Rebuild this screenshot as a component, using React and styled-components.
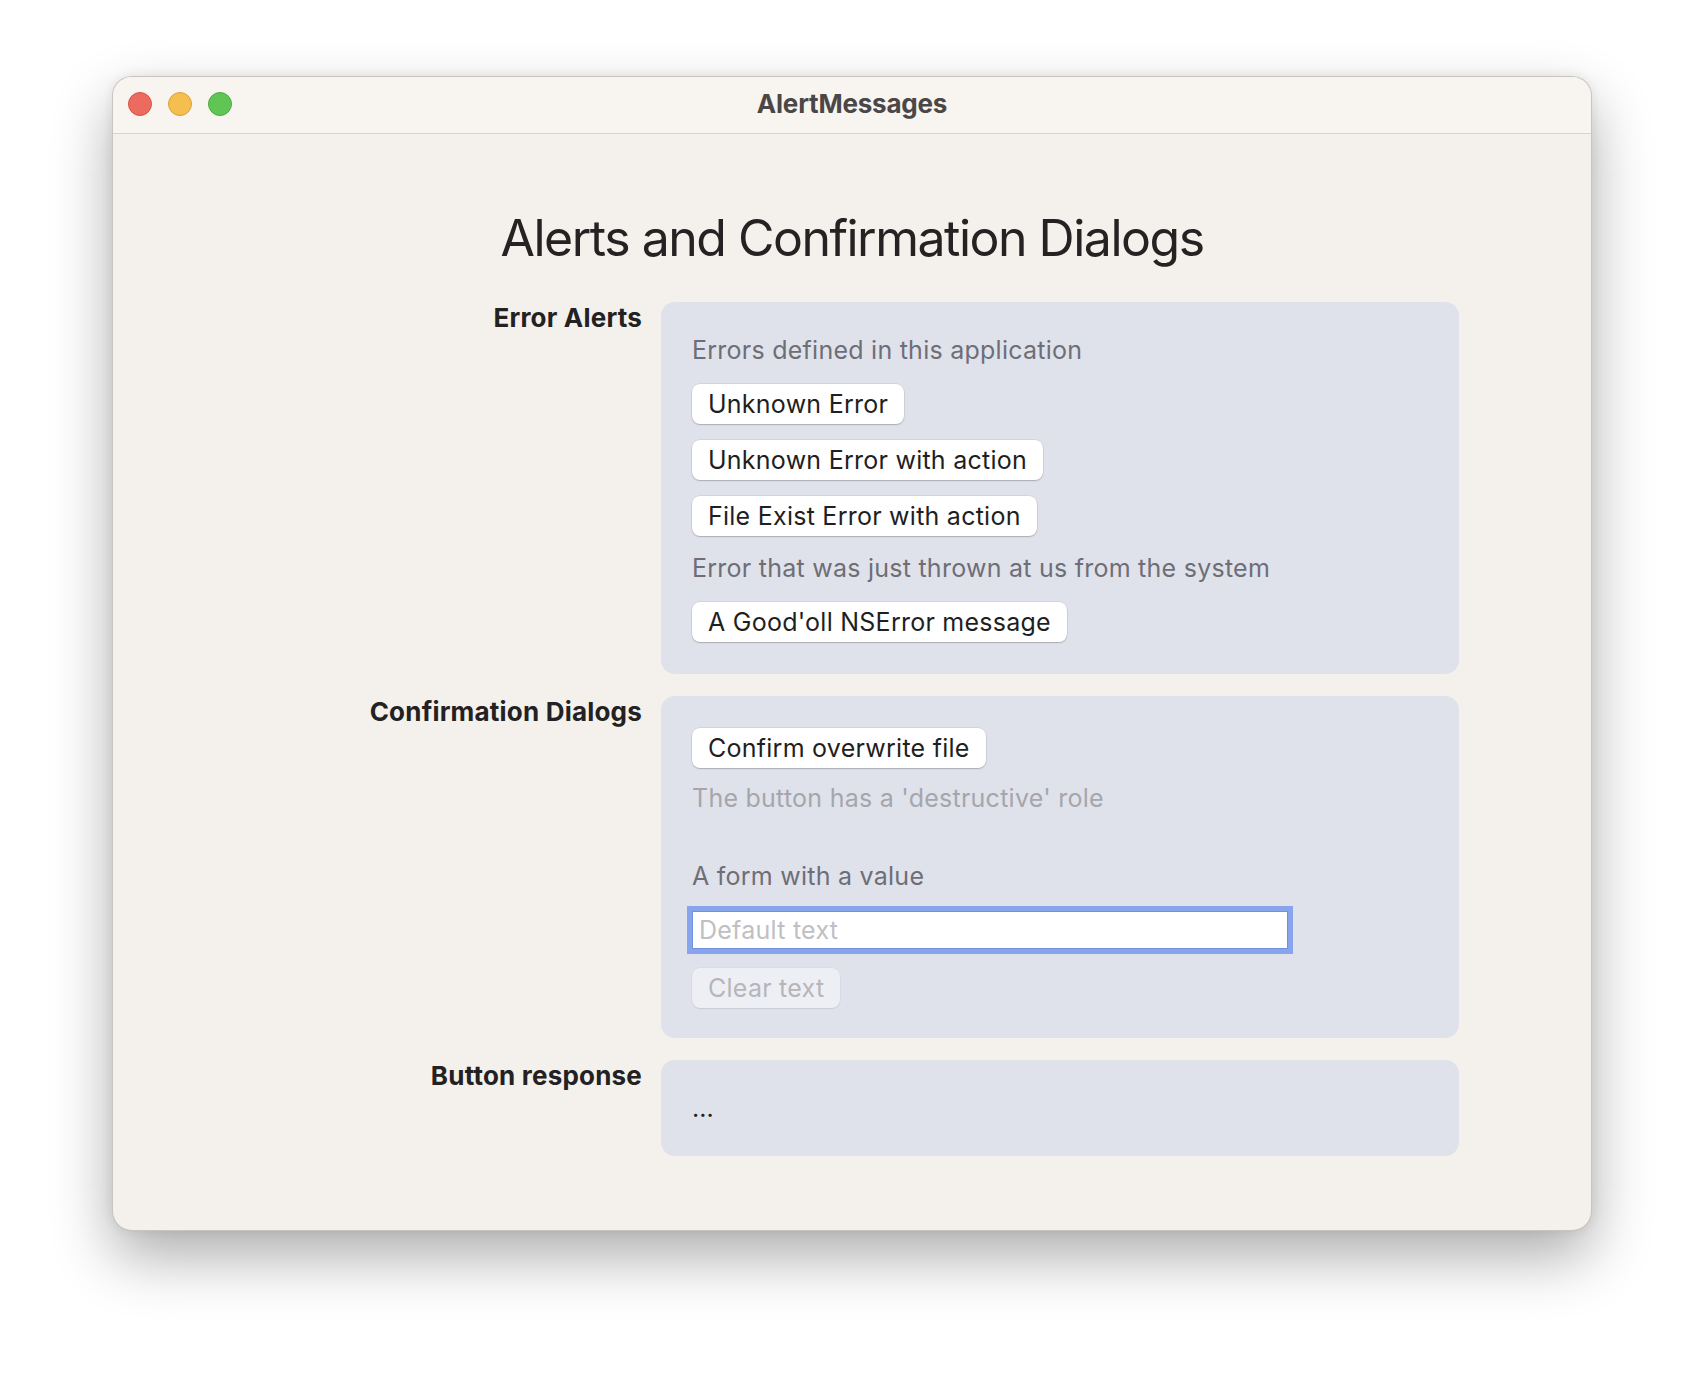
import React from "react";
import styled, { createGlobalStyle } from "styled-components";

const GlobalStyle = createGlobalStyle`
  html, body {
    margin: 0;
    padding: 0;
    background: #ffffff;
  }
  body {
    font-family: Inter, "Noto Sans", "Liberation Sans", sans-serif;
  }
`;

const Page = styled.div`
  padding: 76px 112px 148px;
`;

const Window = styled.div`
  width: 1480px;
  background: #f4f0ec;
  border-radius: 20px;
  border: 1px solid rgba(0, 0, 0, 0.18);
  box-sizing: border-box;
  box-shadow: 0 26px 60px rgba(0, 0, 0, 0.32), 0 0 12px rgba(0, 0, 0, 0.08);
  overflow: hidden;
  padding-bottom: 74px;
`;

const TitleBar = styled.div`
  position: relative;
  height: 56px;
  display: flex;
  align-items: center;
  justify-content: center;
  background: #f8f4f0;
  border-bottom: 1px solid #d8d4d0;
`;

const Lights = styled.div`
  position: absolute;
  left: 15px;
  top: 15px;
  display: flex;
  gap: 16px;
`;

const Light = styled.span`
  width: 24px;
  height: 24px;
  border-radius: 50%;
  box-sizing: border-box;
  background: ${(props) => props.color};
  border: 1px solid ${(props) => props.edge};
`;

const WindowTitle = styled.div`
  font-size: 26px;
  font-weight: 700;
  color: #4a4746;
  letter-spacing: -0.2px;
  margin-top: -3px;
`;

const Heading = styled.h1`
  margin: 72px 0 32px;
  text-align: center;
  font-size: 50px;
  line-height: 64px;
  font-weight: 400;
  color: #242222;
  letter-spacing: -1.5px;
`;

const FormGrid = styled.div`
  display: grid;
  grid-template-columns: 397px 798px;
  column-gap: 19px;
  row-gap: 22px;
  justify-content: center;
`;

const Label = styled.div`
  text-align: right;
  font-size: 26px;
  line-height: 32px;
  font-weight: 700;
  color: #232121;
  letter-spacing: 0.2px;
`;

const Card = styled.div`
  background: #e0e2eb;
  border-radius: 14px;
  padding: 30px 31px ${(props) => props.bottom || 30}px;
  display: flex;
  flex-direction: column;
  align-items: flex-start;
  gap: 16px;
`;

const Caption = styled.div`
  font-size: 25px;
  line-height: 36px;
  margin-top: ${(props) => props.offset || 0}px;
  color: ${(props) => (props.faint ? "#a5a6ad" : "#6e6e77")};
  letter-spacing: 0.25px;
`;

const Response = styled.div`
  font-size: 25px;
  line-height: 36px;
  color: #222;
`;

const Button = styled.button`
  font-family: inherit;
  font-size: 25px;
  line-height: 28px;
  height: 40px;
  padding: 0 16px;
  margin-top: ${(props) => props.offset || 0}px;
  border: none;
  border-radius: 8px;
  background: ${(props) => (props.disabled ? "#eeeff4" : "#ffffff")};
  color: ${(props) => (props.disabled ? "#b6b6ba" : "#1f1f1f")};
  box-shadow: ${(props) =>
    props.disabled
      ? "0 0 0 0.5px rgba(0,0,0,0.05), 0 1px 1px rgba(0,0,0,0.08)"
      : "0 0 0 0.5px rgba(0,0,0,0.1), 0 1px 1.5px rgba(0,0,0,0.2)"};
  letter-spacing: 0.25px;
  cursor: default;
`;

const Spacer = styled.div`
  height: 10px;
`;

const Field = styled.input`
  font-family: inherit;
  font-size: 25px;
  letter-spacing: 0.25px;
  width: 596px;
  height: 38px;
  box-sizing: border-box;
  margin-top: 1px;
  padding: 0 6px;
  border: 1px solid #7191e0;
  border-radius: 0;
  outline: none;
  background: #ffffff;
  box-shadow: 0 0 0 5px #87a5ed;
  color: #222;
  &::placeholder {
    color: #c0c0c4;
  }
`;

const lights = [
  { color: "#ec6a5e", edge: "#d45447" },
  { color: "#f4bf4f", edge: "#d9a13a" },
  { color: "#61c554", edge: "#4ea843" },
];

const App = () => {
  return (
    <Page>
      <GlobalStyle />
      <Window>
        <TitleBar>
          <Lights>
            {lights.map((l) => (
              <Light key={l.color} color={l.color} edge={l.edge} />
            ))}
          </Lights>
          <WindowTitle>AlertMessages</WindowTitle>
        </TitleBar>
        <Heading>Alerts and Confirmation Dialogs</Heading>
        <FormGrid>
          <Label>Error Alerts</Label>
          <Card bottom={32}>
            <Caption>Errors defined in this application</Caption>
            <Button>Unknown Error</Button>
            <Button>Unknown Error with action</Button>
            <Button>File Exist Error with action</Button>
            <Caption offset={-2}>
              Error that was just thrown at us from the system
            </Caption>
            <Button>A Good'oll NSError message</Button>
          </Card>

          <Label>Confirmation Dialogs</Label>
          <Card>
            <Button offset={2}>Confirm overwrite file</Button>
            <Caption faint offset={-4}>
              The button has a 'destructive' role
            </Caption>
            <Spacer />
            <Caption>A form with a value</Caption>
            <Field placeholder="Default text" readOnly />
            <Button disabled offset={3}>
              Clear text
            </Button>
          </Card>

          <Label>Button response</Label>
          <Card>
            <Response>...</Response>
          </Card>
        </FormGrid>
      </Window>
    </Page>
  );
};

export default App;
